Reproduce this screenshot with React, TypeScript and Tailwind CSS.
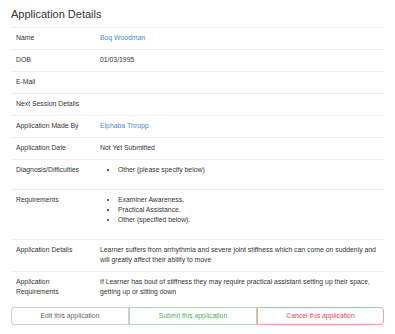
import React from 'react';

const rows: { label: React.ReactNode; value?: React.ReactNode }[] = [
  { label: 'Name', value: <a className="text-[#3b8ee4]">Boq Woodman</a> },
  { label: 'DOB', value: '01/03/1995' },
  { label: 'E-Mail' },
  { label: 'Next Session Details' },
  { label: 'Application Made By', value: <a className="text-[#3b8ee4]">Elphaba Thropp</a> },
  { label: 'Application Date', value: 'Not Yet Submitted' },
  {
    label: 'Diagnosis/Difficulties',
    value: (
      <ul className="list-disc pl-[18px] mb-[8px]">
        <li>Other (please specify below)</li>
      </ul>
    ),
  },
  {
    label: 'Requirements',
    value: (
      <ul className="list-disc pl-[18px] mb-[8px]">
        <li>Examiner Awareness.</li>
        <li>Practical Assistance.</li>
        <li>Other (specified below).</li>
      </ul>
    ),
  },
  {
    label: 'Application Details',
    value:
      'Learner suffers from arrhythmia and severe joint stiffness which can come on suddenly and will greatly affect their ability to move',
  },
  {
    label: 'Application Requirements',
    value:
      'If Learner has bout of stiffness they may require practical assistant setting up their space, getting up or sitting down',
  },
];

export default function App() {
  return (
    <div className="w-[395px] h-[334px] bg-white px-[11px] pt-[8px] text-[#333] font-['Liberation_Sans',Arial,sans-serif]">
      <h2 className="text-[11px] leading-[13px] mb-[6px] text-[#333]">Application Details</h2>
      <div className="text-[6.85px] leading-[10px]">
        {rows.map((r, i) => (
          <div key={i} className="flex border-t border-[#ebebeb]">
            <div className="w-[84px] shrink-0 pl-[5px] pr-[5px] pt-[5px] pb-[6px]">{r.label}</div>
            <div className="flex-1 pl-[5px] pr-[5px] pt-[5px] pb-[6px]">{r.value}</div>
          </div>
        ))}
      </div>
      <div className="flex mt-[4px] text-[6.85px]">
        <button className="w-[118px] h-[18px] border border-[#cfcfcf] rounded-l-[3px] text-[#666]">
          Edit this application
        </button>
        <button className="w-[128px] h-[18px] border border-[#a9dcb1] text-[#45b45a]">
          Submit this application
        </button>
        <button className="flex-1 h-[18px] border border-[#f2a2aa] rounded-r-[3px] text-[#e2485a]">
          Cancel this application
        </button>
      </div>
    </div>
  );
}
